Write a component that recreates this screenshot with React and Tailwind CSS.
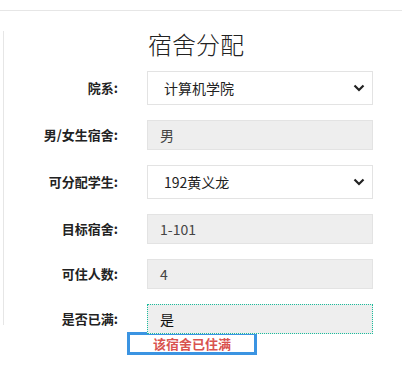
export default function App() {
  const rows = [
    { label: "院系:", value: "计算机学院", kind: "select" },
    { label: "男/女生宿舍:", value: "男", kind: "input" },
    { label: "可分配学生:", value: "192黄义龙", kind: "select" },
    { label: "目标宿舍:", value: "1-101", kind: "input" },
    { label: "可住人数:", value: "4", kind: "input" },
    { label: "是否已满:", value: "是", kind: "focus" },
  ];

  return (
    <div
      className="w-[402px] h-[368px] bg-white overflow-hidden text-[#333]"
      style={{ fontFamily: '"Noto Sans CJK SC", "Liberation Sans", sans-serif' }}
    >
      <div className="h-[11px] border-b border-[#e6e6e6]" />
      <div className="ml-[3px] mt-[20px] h-[294px] border-l border-[#e6e6e6]">
        <h1 className="pl-[144px] pt-[1px] text-[24px] leading-[24px] font-light text-[#222]">
          宿舍分配
        </h1>
        <div className="mt-[15px] flex flex-col gap-[15px]">
          {rows.map((r) => (
            <div key={r.label} className="flex items-center">
              <div className="w-[114px] text-right text-[13px] font-bold text-[#222]">
                {r.label}
              </div>
              {r.kind === "select" ? (
                <div className="ml-[29px] w-[226px] h-[34px] border border-[#e3e3e3] bg-white flex items-center justify-between pl-[16px] pr-[4px] text-[14px] text-[#222]">
                  <span>{r.value}</span>
                  <svg width="12" height="8" viewBox="0 0 12 8" className="mr-[3px]">
                    <path d="M1.5 1.5 L6 6 L10.5 1.5" fill="none" stroke="#222" strokeWidth="2.2" />
                  </svg>
                </div>
              ) : (
                <div
                  className={
                    r.kind === "focus"
                      ? "ml-[29px] w-[226px] h-[30px] border border-dotted border-[#1abc9c] bg-[#eeeeee] flex items-center pl-[12px] text-[14px] text-[#111]"
                      : "ml-[29px] w-[226px] h-[30px] border border-[#e3e3e3] bg-[#eeeeee] flex items-center pl-[12px] text-[14px] text-[#444]"
                  }
                >
                  {r.value}
                </div>
              )}
            </div>
          ))}
        </div>
        <div className="ml-[123px] mt-[-2px] w-[130px] h-[23px] border-[3px] border-[#3b94e2] bg-white flex items-center justify-center text-[13px] font-semibold text-[#d9534f]">
          该宿舍已住满
        </div>
      </div>
    </div>
  );
}
